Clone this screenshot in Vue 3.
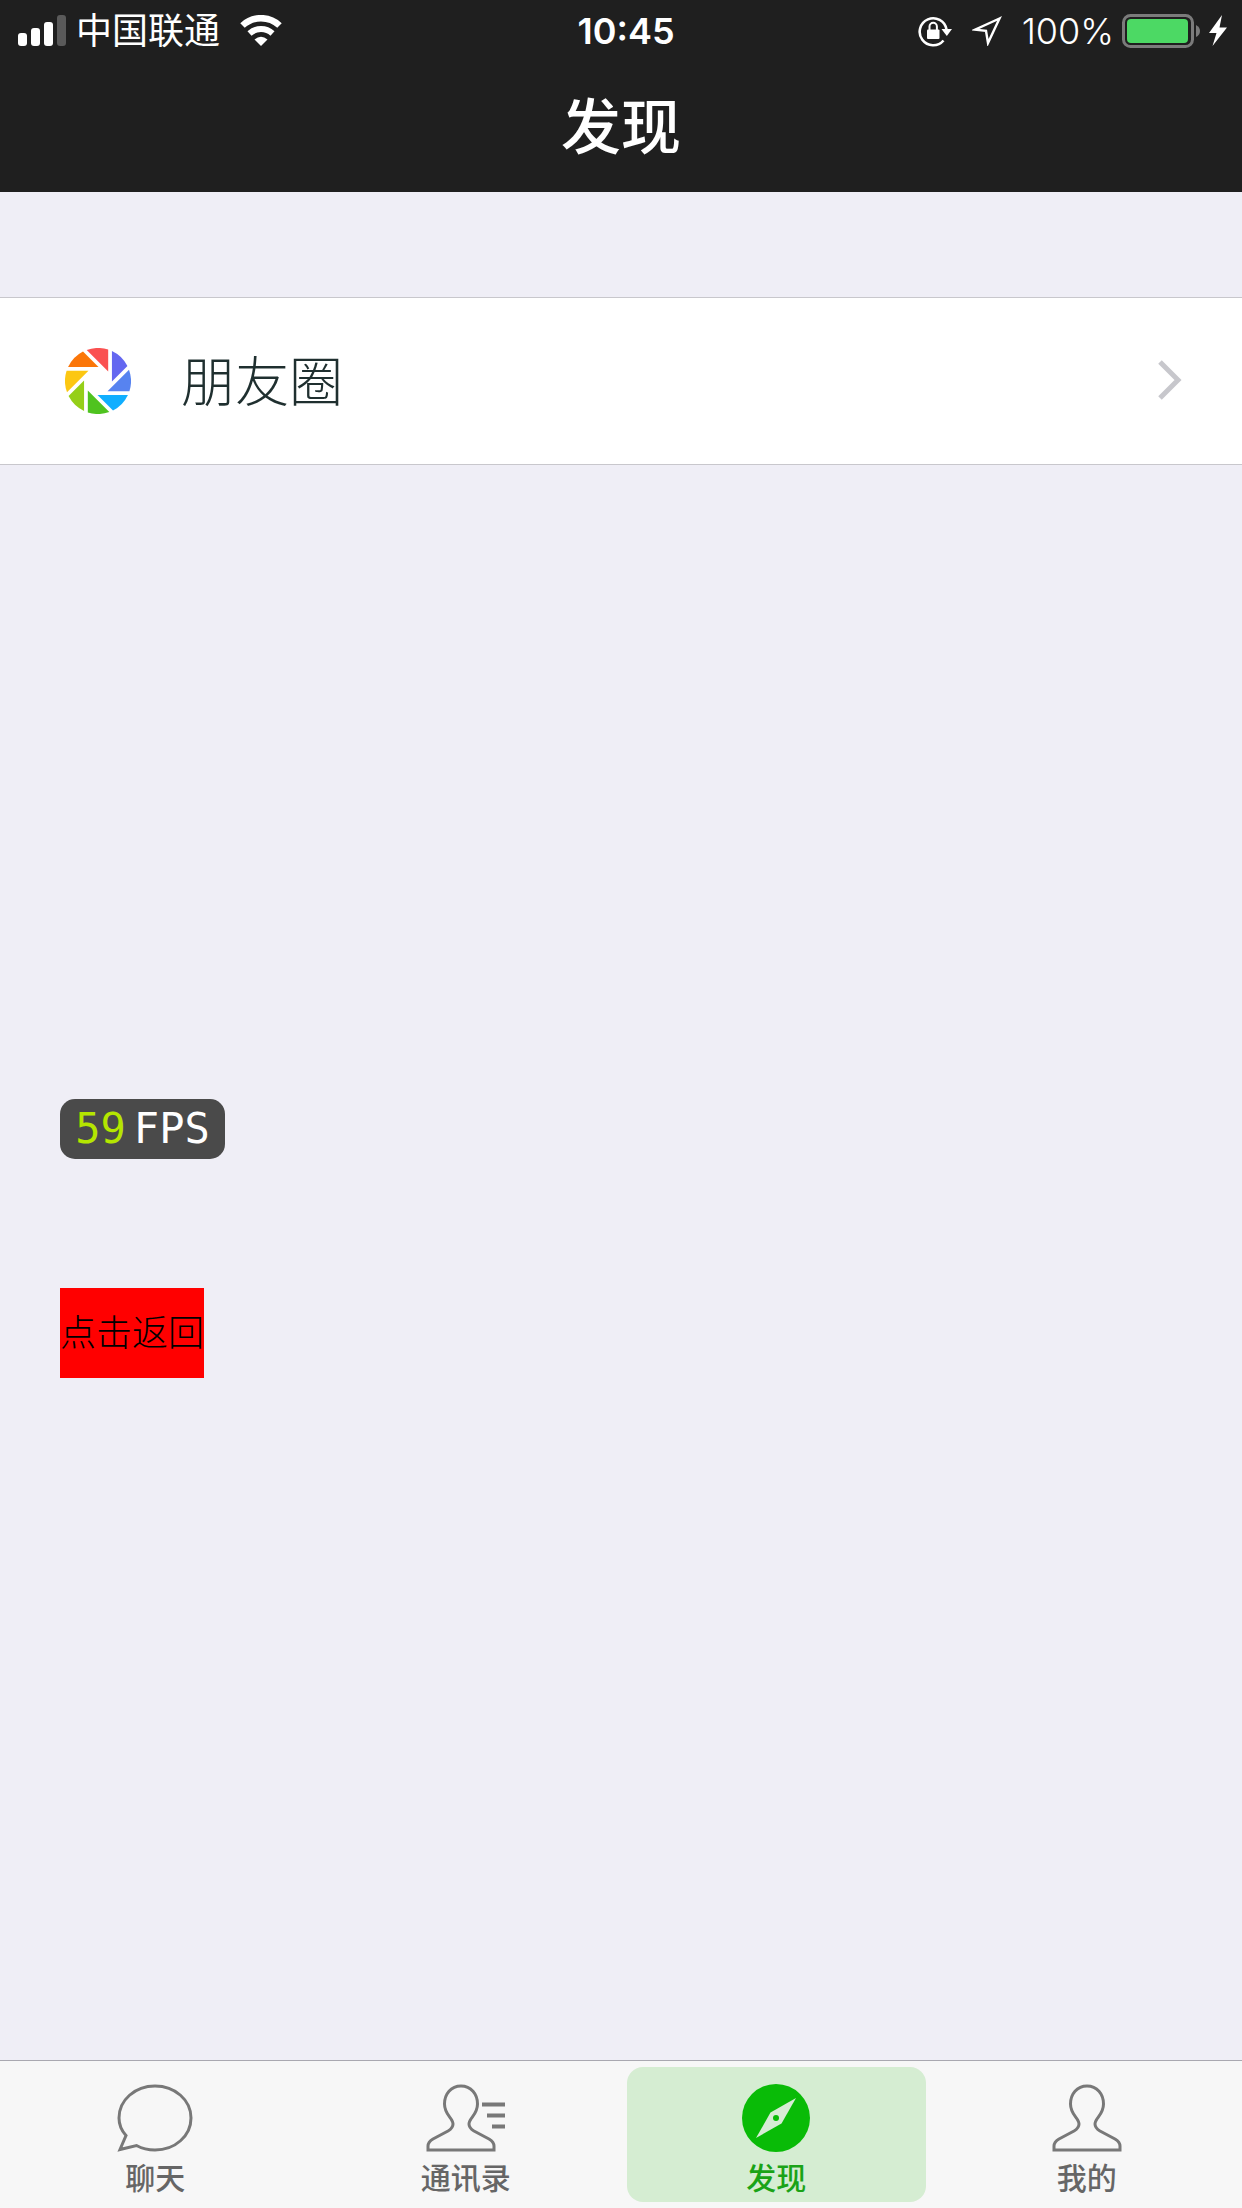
<script setup>
import { ref } from 'vue'

const blades = ['#fa5151', '#6467f0', '#5783f0', '#10aeff', '#4fc31f', '#95cf18', '#fcc712', '#fb7609']
const tabs = [
  { id: 'chat', label: '聊天' },
  { id: 'contacts', label: '通讯录' },
  { id: 'discover', label: '发现' },
  { id: 'me', label: '我的' },
]
const current = ref('discover')
</script>

<template>
  <div class="app">
    <header class="header">
      <div class="status">
        <div class="side">
          <svg class="bars" width="48" height="32" viewBox="0 0 48 32" fill="#fff">
            <rect x="0" y="18" width="9" height="13" rx="3" />
            <rect x="13" y="13" width="9" height="18" rx="3" />
            <rect x="26" y="7" width="9" height="24" rx="3" />
            <rect x="39" y="0" width="9" height="31" rx="3" fill="#5a5a5a" />
          </svg>
          <span class="carrier">中国联通</span>
          <svg class="wifi" width="42" height="32" viewBox="0 0 42 32">
            <path d="M2.500 10.500A27 27 0 0 1 39.500 10.500" fill="none" stroke="#fff" stroke-width="6.500" />
            <path d="M9.500 18.500A17 17 0 0 1 32.500 18.500" fill="none" stroke="#fff" stroke-width="6" />
            <path d="M21 31L14.500 24.500Q21 19 27.500 24.500Z" fill="#fff" />
          </svg>
        </div>
        <time class="time">10:45</time>
        <div class="side end">
          <svg class="lock" width="34" height="32" viewBox="0 0 34 32">
            <path d="M25.500 25.500A13.500 13.500 0 1 1 28.500 14.500" fill="none" stroke="#fff" stroke-width="2.600" />
            <path d="M23.500 14H34L28.800 21Z" fill="#fff" />
            <rect x="9" y="14.500" width="12.500" height="9.500" rx="1" fill="#fff" />
            <path d="M11.500 15V11.500a3.700 3.700 0 0 1 7.400 0V15" fill="none" stroke="#fff" stroke-width="2" />
          </svg>
          <svg class="nav" width="30" height="30" viewBox="0 0 30 30" fill="none" stroke="#fff" stroke-width="2.400">
            <path d="M27.500 2.500L3 13.700L14 14.800L16 27Z" />
          </svg>
          <span class="percent">100%</span>
          <svg class="battery" width="78" height="34" viewBox="0 0 78 34">
            <rect x="1.500" y="1.500" width="69" height="31" rx="7" fill="none" stroke="#7b7b7b" stroke-width="3" />
            <rect x="5" y="5" width="61" height="24" rx="4" fill="#4cd964" />
            <path d="M74 11Q78 13 78 17T74 23Z" fill="#7b7b7b" />
          </svg>
          <svg class="bolt" width="26" height="32" viewBox="0 0 26 32" fill="#fff">
            <path d="M14 0L1 18H8.500L4.500 31L19 12.500H11.500Z" />
          </svg>
        </div>
      </div>
      <h1 class="title">发现</h1>
    </header>

    <main class="main">
      <a class="row" href="#moments">
        <svg width="66" height="66" viewBox="-33 -33 66 66">
          <path
            v-for="(color, i) in blades"
            :key="color"
            :fill="color"
            :transform="`rotate(${i * 45})`"
            d="M-11.300 -31A33 33 0 0 1 10.200 -31.400V-9.500Z"
          />
        </svg>
        <span class="row-label">朋友圈</span>
        <svg class="chevron" width="26" height="42" viewBox="0 0 26 42" fill="none" stroke="#c7c7cc" stroke-width="5">
          <path d="M3 2L21 20L3 38" />
        </svg>
      </a>
      <div class="fps"><span class="count">59</span><span>FPS</span></div>
      <button class="back" type="button">点击返回</button>
    </main>

    <nav class="tabs">
      <button
        v-for="tab in tabs"
        :key="tab.id"
        type="button"
        class="tab"
        :class="{ active: current === tab.id }"
        @click="current = tab.id"
      >
        <svg v-if="tab.id === 'chat'" width="76" height="70" viewBox="0 0 76 70" fill="none" stroke="#787878" stroke-width="3">
          <path d="M9 52.500C4 47 2 41 2 35C2 17 18 3 38 3S74 17 74 35S58 67 38 67C31 67 25 65.500 19.500 62.500L3 66.500Z" />
        </svg>
        <svg v-else-if="tab.id === 'contacts'" width="80" height="70" viewBox="0 0 80 70" fill="none" stroke="#787878" stroke-width="3">
          <path d="M35 3C25 3 18.500 11 18.500 21C18.500 32 27 35 27 41Q27 45 22 48L7 56Q2 59 2 63V67H68V63Q68 59 63 56L48 48Q43 45 43 41C43 35 51.500 32 51.500 21C51.500 11 45 3 35 3Z" />
          <path d="M56 21.500H79M61 32.500H79M66 43.500H79" stroke-width="4" />
        </svg>
        <svg v-else-if="tab.id === 'discover'" width="70" height="70" viewBox="0 0 70 70">
          <circle cx="35" cy="35" r="34" fill="#09bb07" />
          <path d="M55 15L40.500 40.500L15 55L29.500 29.500Z" fill="#d7ecd5" />
          <circle cx="35" cy="35" r="3" fill="#09bb07" />
        </svg>
        <svg v-else width="70" height="70" viewBox="0 0 70 70" fill="none" stroke="#787878" stroke-width="3">
          <path d="M35 3C25 3 18.500 11 18.500 21C18.500 32 27 35 27 41Q27 45 22 48L7 56Q2 59 2 63V67H68V63Q68 59 63 56L48 48Q43 45 43 41C43 35 51.500 32 51.500 21C51.500 11 45 3 35 3Z" />
        </svg>
        <span>{{ tab.label }}</span>
      </button>
    </nav>
  </div>
</template>

<style>
body {
  margin: 0;
  background: #efeef6;
}
</style>

<style scoped>
.app {
  display: flex;
  flex-direction: column;
  min-height: 100vh;
  font-family: Inter, "Noto Sans CJK SC", sans-serif;
}
svg {
  display: block;
  flex: none;
}
button {
  margin: 0;
  padding: 0;
  border: 0;
  font-family: inherit;
}
.header {
  background: #1f1f1f;
  color: #fff;
  padding-bottom: 21px;
}
.status {
  display: grid;
  grid-template-columns: 1fr auto 1fr;
  align-items: center;
  height: 62px;
  padding: 0 8px 0 18px;
  font-size: 36px;
  line-height: 44px;
}
.side {
  display: flex;
  align-items: center;
}
.end {
  justify-content: flex-end;
}
.carrier {
  margin: 0 20px 0 10px;
}
.time {
  font-weight: 600;
}
.percent {
  font-weight: 300;
}
.nav {
  margin: 0 20px;
}
.battery {
  margin: 0 8px;
}
.title {
  margin: 21px 0 0;
  font-size: 60px;
  line-height: 88px;
  font-weight: 500;
  text-align: center;
}
.main {
  flex: 1;
  display: flex;
  flex-direction: column;
  align-items: flex-start;
  padding: 105px 0;
}
.row {
  align-self: stretch;
  display: flex;
  align-items: center;
  height: 166px;
  padding: 0 59px 0 65px;
  border: solid #c8c7cc;
  border-width: 1px 0;
  background: #fff;
  color: #1f2f2f;
  text-decoration: none;
}
.row-label {
  flex: 1;
  margin-left: 50px;
  padding-top: 4px;
  font-size: 54px;
  line-height: 80px;
  font-weight: 300;
}
.fps {
  display: flex;
  justify-content: center;
  gap: 8px;
  width: 165px;
  margin: 634px 0 129px 60px;
  border-radius: 15px;
  background: #4a4a4a;
  color: #fff;
  font-family: "DejaVu Sans Mono", monospace;
  font-size: 42px;
  line-height: 60px;
}
.count {
  color: #b5e600;
}
.back {
  height: 90px;
  margin-left: 60px;
  background: #f00;
  color: #000;
  font-size: 36px;
  line-height: 54px;
  font-weight: 300;
}
.tabs {
  display: flex;
  gap: 12px;
  padding: 6px;
  border-top: 1px solid #a9a8b0;
  background: #f7f7f7;
}
.tab {
  flex: 1;
  display: flex;
  flex-direction: column;
  align-items: center;
  gap: 3px;
  height: 135px;
  padding-top: 16px;
  border-radius: 16px;
  background: none;
  color: #666;
  font-size: 30px;
  line-height: 44px;
  font-weight: 500;
}
.active {
  background: #d5edd2;
  color: #1aa317;
}
</style>
